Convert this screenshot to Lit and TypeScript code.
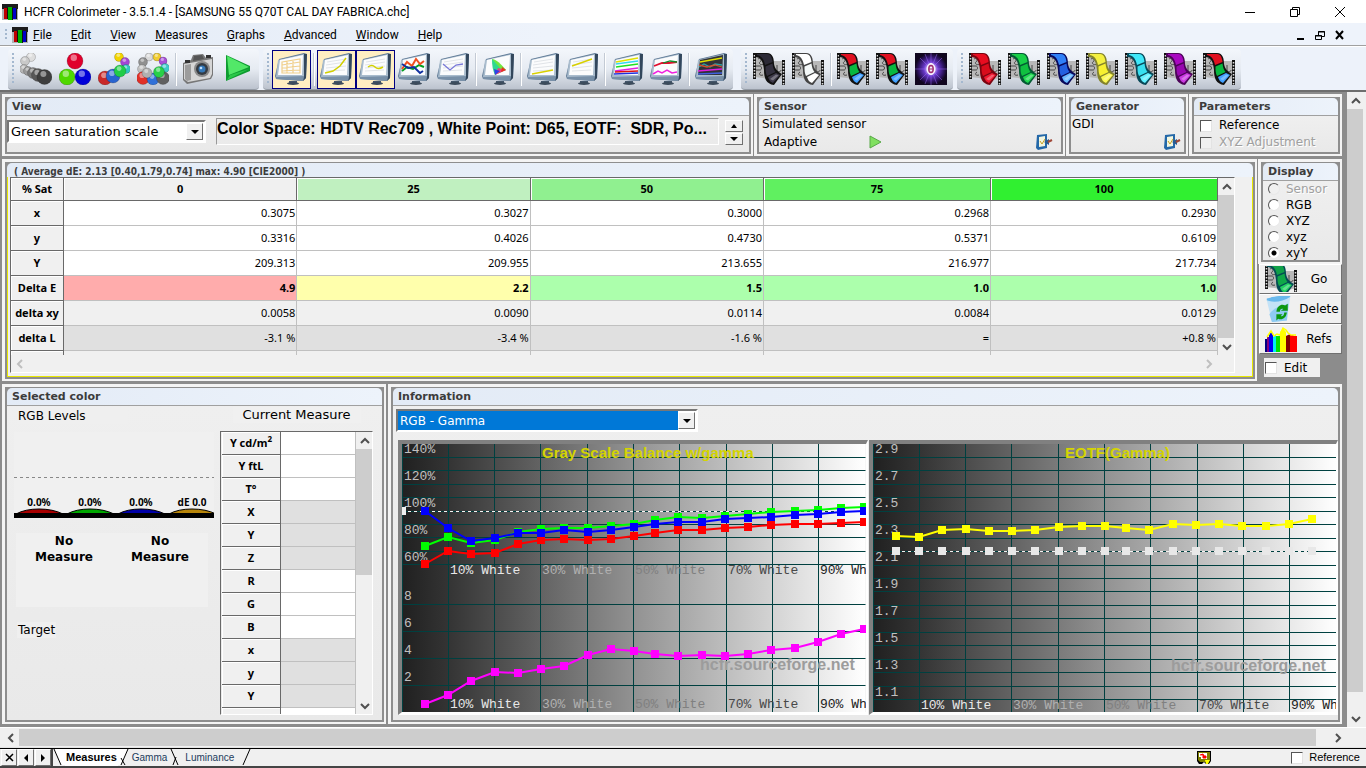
import { LitElement, html, svg, css, nothing } from "lit";
import { customElement } from "lit/decorators.js";
import { classMap } from "lit/directives/class-map.js";
import { styleMap } from "lit/directives/style-map.js";

/* ---------- toolbar glyphs (32 x 32) ---------- */

const ball = (x: number, y: number, r: number, c: string) => svg`
  <circle cx=${x} cy=${y} r=${r} fill=${c} stroke="#000" stroke-opacity=".3" stroke-width=".6"></circle>
  <circle cx=${x - r * 0.15} cy=${y - r * 0.4} r=${r * 0.4} fill="#fff" fill-opacity=".45"></circle>`;

const monitor = (inside: unknown, screen = "#fbfcfd") => svg`
  <path d="M4 6 29 0 32 1 31 25 28 28 1 26 0 23Z" fill="#5f7a96"></path>
  <path d="M3 7 29 1 29 24 1 24Z" fill="#a9bccd"></path>
  <path d="M29 1 32 1 31 25 28 28 29 24Z" fill="#33475c"></path>
  <path d="M1 24 29 23 28 28 1 26Z" fill="#7890a8"></path>
  <path d="M5 7 28 2 27 22 3 22Z" fill=${screen}></path>
  ${inside}
  <path d="M14 28h8v2h-8z" fill="#44566a"></path>
  <ellipse cx="18" cy="30.5" rx="6" ry="1.4" fill="#3c4b5b"></ellipse>`;

const faint = svg`<path d="M7 9 26 6M6 12 26 9M6 15 26 13M6 18 25 17" stroke="#d9dde2" stroke-width=".8" fill="none"></path>`;
const line = (d: string, c: string, w = 1.3) => svg`<path d=${d} stroke=${c} stroke-width=${w} fill="none"></path>`;

const film = (a: string, b: string, c: string, edge = "#111") => svg`
  <path d="M1 2 14 2 18 8 31 8 31 25 20 28 10 25 1 24Z" fill="#b8b8b8"></path>
  <path d="M5 6c3-2 4 2 2 3s1 4 4 2M2 13h5c2 0 2 4 0 4H3M24 12v5c0 3 4 2 4 0M22 20c2-2 6 0 4 3M8 19c-3 2-1 4 2 3" stroke="#444" fill="none"></path>
  <path d="M1.500 0V26M30.500 7V32" stroke="#111" stroke-width="3"></path>
  <path d="M1.500 2V25M30.500 9V32" stroke="#ddd" stroke-width="1.600" stroke-dasharray="1.500 1.500"></path>
  <path d="M2 0H14C20 0 21 6 21 11C22 16 24 18 29 21L21 32C13 31 11 25 11 17C10 8 8 4 2 4Z" fill=${edge}></path>
  <path d="M4 1H14C18 1 19 5 19.500 9L12 12C11 7 9 3 4 2Z" fill=${a}></path>
  <path d="M12.500 13.500 19.500 10.500C20 15 21 17 22.500 19L14 23C12.500 20 12.500 17 12.500 13.500Z" fill=${b}></path>
  <path d="M15 24 23 20 27 22 20 30C17 29 16 27 15 24Z" fill=${c}></path>
  <path d="M17 26 23 21.500 25.500 22.500 20 27.500Z" fill="#fff" fill-opacity=".3"></path>`;

const glyphs: Record<string, unknown> = {
  grays: svg`${ball(11, 4, 4.5, "#dedede")}${ball(5, 8, 4.5, "#c9c9c9")}${ball(4, 16, 4.5, "#b5b5b5")}${ball(8, 18, 4.5, "#9a9a9a")}${ball(13, 20, 5.5, "#787878")}${ball(18, 22, 6.5, "#585858")}${ball(24.5, 24, 7.5, "#3e3e3e")}`,
  primaries: svg`${ball(16, 8, 8, "#e0002c")}${ball(8, 24, 8, "#4fd800")}${ball(24, 24, 8, "#0000d8")}`,
  secondaries: svg`${ball(21, 4, 4.5, "#f2d400")}${ball(27, 9, 4.5, "#a444d4")}${ball(28, 16, 4.5, "#30c8c0")}${ball(7, 25, 7, "#c82828")}${ball(15, 23, 7, "#2864d0")}${ball(22, 18, 6, "#20cc48")}`,
  circle: svg`${ball(12, 4, 4, "#dadada")}${ball(20, 4, 4, "#f0cc30")}${ball(6, 9, 4.5, "#909090")}${ball(26, 8, 4, "#a850d8")}${ball(5, 16, 4.5, "#c0c0c0")}${ball(28, 15, 4.5, "#40ccc8")}${ball(6, 25, 6.5, "#e03028")}${ball(16, 26, 6, "#3070d8")}${ball(26, 25, 6.500, "#606060")}${ball(10, 20, 5, "#b0b0b0")}${ball(22, 19, 5.500, "#28d048")}`,
  camera: svg`
    <path d="M1 10 9 7 11 2 21 1 24 5 31 4 31 22 29 26 5 31 1 27Z" fill="#777"></path>
    <path d="M2 11 30 6 30 21 28 25 6 29 2 26Z" fill="#d6d6d6"></path>
    <path d="M3 12 9 11 9 27 5 28 3 26Z" fill="#9c9c9c"></path>
    <path d="M12 3 20 2 22 6 11 8Z" fill="#555"></path>
    <path d="M24 2h5v3h-5zM3 7h5v3H3z" fill="#333"></path>
    <circle cx="20" cy="16" r="8" fill="#8a8a8a"></circle><circle cx="20" cy="16" r="6" fill="#353b42"></circle>
    <circle cx="20" cy="16" r="3.500" fill="#3478b8"></circle><circle cx="19" cy="15" r="1.300" fill="#bfe0ff"></circle>`,
  play: svg`<path d="M5 2 29 13 29 18 5 28Z" fill="#0e9c30"></path><path d="M6 3 28 14 8 22Z" fill="#52e868"></path><path d="M6 27 28 16 9 22Z" fill="#2ac848"></path>`,
  grid: monitor(svg`<path d="M7 9 25 6V20L7 20ZM7 12 25 9M7 15 25 13M7 18 25 17M12 8V20M18 7V20" stroke="#f0cf8c" stroke-width="1.200" fill="none"></path>`),
  curve: monitor(svg`${faint}${line("M5 20 13 18 20 13 26 5", "#d2d000", 1.5)}`),
  wave: monitor(svg`${faint}${line("M9 14q4-3 7 0t8 0", "#d2d000", 1.5)}`),
  rgb: monitor(svg`${line("M4 18 9 14 15 16 21 12 26 14", "#00a020", 2)}${line("M4 16 9 9 14 13 18 6 22 11 26 8", "#f05020", 2)}${line("M4 11 10 15 16 14 22 20 25 18", "#1030a0", 2)}`),
  dip: monitor(svg`${faint}${line("M6 11 13 17 19 12 26 11", "#7878d8")}`),
  gamut: monitor(svg`<path d="M10 6C14 6 19 11 24 17L13 22Z" fill="#70e840"></path><path d="M10 6C10 13 11 18 13 22L18 15Z" fill="#30d890"></path><path d="M24 17 13 22 16 15Z" fill="#e84080"></path><path d="M13 22 12 16 18 18Z" fill="#3040e8"></path><path d="M20 14 24 17 19 19Z" fill="#e83020"></path>`),
  low: monitor(svg`${faint}${line("M5 21 26 17", "#d8d000", 1.600)}`),
  high: monitor(svg`${faint}${line("M6 13 26 6", "#d8d000", 1.600)}`),
  multi: monitor(svg`${line("M5 9 27 5", "#e0e000")}${line("M5 11 27 8", "#30d8f0")}${line("M5 14 27 11", "#20e020")}${line("M4 18 27 15", "#e020e0")}${line("M4 19 27 18", "#e01010")}${line("M3 21 27 20", "#2030e0")}`),
  mixed: monitor(svg`${line("M4 13 12 10 19 10 27 9", "#e01030", 1.800)}${line("M13 10 20 8 27 9", "#109030")}${line("M3 21 8 18 12 20 17 17 22 20 27 19", "#f020e0", 1.500)}`),
  dark: monitor(svg`${line("M5 9 27 5", "#e0e000")}${line("M4 14 9 11 15 14 20 11 27 12", "#30a0a0")}${line("M4 12 12 14 20 12 27 14", "#d05030")}${line("M3 18 27 16", "#e020e0")}${line("M3 21 27 20", "#4060e0")}`, "#323338"),
  filmDark: film("#2c2a36", "#33303e", "#3c3848"),
  filmWhite: film("#fff", "#f4f8f8", "#fff", "#444"),
  filmRgb: film("#e01020", "#08b840", "#40a0ff"),
  filmRed: film("#e80c20", "#d80c1c", "#f01830", "#7a0410"),
  filmGreen: film("#18d048", "#10c040", "#20d850", "#045a34"),
  filmBlue: film("#3080f8", "#2460e0", "#68b8ff", "#08085a"),
  filmYellow: film("#f4f040", "#f8f030", "#fcf850", "#83832c"),
  filmCyan: film("#40e8f8", "#38e0f0", "#60f0ff", "#084858"),
  filmPurple: film("#a808c0", "#9808b0", "#c838e0", "#4c0458"),
  filmGo: film("#10a048", "#10a848", "#20d060", "#044c54"),
  nova: svg`<defs><radialGradient id="nova"><stop offset="0" stop-color="#fff"></stop><stop offset=".22" stop-color="#d0b0ff"></stop><stop offset=".45" stop-color="#6838c8"></stop><stop offset=".8" stop-color="#2c125e"></stop><stop offset="1" stop-color="#10061e"></stop></radialGradient></defs>
    <rect width="32" height="32" fill="url(#nova)"></rect>
    <path d="M16 0V11M16 21V32M0 16H10M22 16H32M5 5 12 12M27 5 20 12M5 27 12 20M27 27 20 20M10 1 14 11M22 1 18 11M10 31 14 21M22 31 18 21" stroke="#a070ff" stroke-opacity=".6" stroke-width=".8"></path>
    <ellipse cx="16" cy="16" rx="4" ry="5.500" fill="#f4ecff" stroke="#fff"></ellipse><ellipse cx="16" cy="16" rx="2.200" ry="3.500" fill="none" stroke="#a03070" stroke-width="1.500"></ellipse><path d="M14 16h4" stroke="#a03070"></path>`,
  bin: svg`<path d="M2 6 29 1 25 29 8 31Z" fill="#c4e2f6"></path><path d="M2 6C9 9 20 8 29 2L28 1C20 0 8 2 2 4Z" fill="#68b8ec"></path><path d="M5 22C10 15 15 13 27 10L25 29 8 31Z" fill="#8ecbf2"></path>
    <path d="M13 19c1-7 6-9 10-7l3-2v8h-8l3-2c-2-1-4 0-4 3zM25 20c-1 7-6 9-10 7l-2 2v-7h7l-2 2c2 1 4-1 4-4z" fill="#0c9810"></path>`,
  spectrum: svg`<path d="M0 29V16h2V29z" fill="#000080"></path><path d="M2 29V14h3V29z" fill="#800080"></path><path d="M4 29V12l2-4 2 4V29z" fill="#0000f0"></path><path d="M8 29V14l3-3V29z" fill="#00f0f0"></path><path d="M11 29V13h4V29z" fill="#00e000"></path><path d="M15 29V9l3-4 3 4V29z" fill="#ff0"></path><path d="M21 29V13l4-2v18z" fill="#800000"></path><path d="M25 29V12h3l1 1h3v16z" fill="#f00"></path><path d="M2 14 6 8 9 13 12 11 15 12 18 5 21 7 23 10 26 12 31 12" stroke="#ff0" stroke-width="1.500" fill="none"></path>`,
};

const icon = (name: string, w = 32, h = 32) =>
  html`<svg class="glyph" width=${w} height=${h} viewBox="0 0 32 32" preserveAspectRatio="xMidYMid slice" aria-hidden="true">${glyphs[name]}</svg>`;

const chevron = (dir: string) => {
  const d: Record<string, string> = { up: "M1 7 5 3 9 7", down: "M1 3 5 7 9 3", left: "M7 1 3 5 7 9", right: "M3 1 7 5 3 9" };
  return html`<svg class="chev" width="10" height="10" viewBox="0 0 10 10" aria-hidden="true"><path d=${d[dir]} fill="none" stroke="currentColor" stroke-width="2"></path></svg>`;
};
const triangle = (dir: string) => {
  const d: Record<string, string> = { up: "M4 2 7 6H1Z", down: "M0 2H8L4 6Z", left: "M6 0V8L2 4Z", right: "M2 0V8L6 4Z" };
  return html`<svg width="8" height="8" viewBox="0 0 8 8" aria-hidden="true"><path d=${d[dir]} fill="#000"></path></svg>`;
};
const sheet = html`<svg width="18" height="18" viewBox="0 0 18 18" aria-hidden="true"><path d="M2 2 12 1 12 15 3 17 1 15Z" fill="#2468a8"></path><path d="M4 4 10 3 10 13 4 14Z" fill="#f2f6e0"></path><path d="M5 8 7 11 10 6" stroke="#c8a020" fill="none"></path><path d="M9 9 14 6V12Z" fill="#2c5c90"></path><path d="M13 9 17 7" stroke="#a04838" stroke-width="2"></path></svg>`;
const appMark = html`<svg width="16" height="16" viewBox="0 0 16 16" aria-hidden="true"><rect width="16" height="16" fill="#1c1c1c"></rect><path d="M0 5H16V16H0Z" fill="#c9ccd0" fill-opacity=".85"></path><path d="M2 4h3v11H2z" fill="#c00000"></path><path d="M6 3h4v13H6z" fill="#00b000"></path><path d="M11 4h3v11h-3z" fill="#0000c8"></path><path d="M5 4h1v11H5zM10 4h1v12h-1zM14 5h1v10h-1z" fill="#111"></path></svg>`;

/* ---------- data ---------- */

type Tool = string | { name: string; on: true };
const toolbars: Tool[][] = [
  ["grays", "primaries", "secondaries", "circle", "|", "camera", "play"],
  [{ name: "grid", on: true }, "|", { name: "curve", on: true }, { name: "wave", on: true }, "rgb", "dip", "|", "gamut", "|", "low", "high", "|", "multi", "mixed", "|", "dark"],
  ["filmDark", "filmWhite", "|", "filmRgb", "filmRgb", "nova"],
  ["filmRed", "filmGreen", "filmBlue", "filmYellow", "filmCyan", "filmPurple", "filmRgb"],
];
const menus = ["File", "Edit", "View", "Measures", "Graphs", "Advanced", "Window", "Help"];

const saturations = [
  { label: "0", color: "#f0f0f0" },
  { label: "25", color: "#c0f0c0" },
  { label: "50", color: "#90f090" },
  { label: "75", color: "#60f060" },
  { label: "100", color: "#30f030" },
];
const measures: { label: string; kind: string; cells: string[] }[] = [
  { label: "x", kind: "plain", cells: ["0.3075", "0.3027", "0.3000", "0.2968", "0.2930"] },
  { label: "y", kind: "plain", cells: ["0.3316", "0.4026", "0.4730", "0.5371", "0.6109"] },
  { label: "Y", kind: "plain", cells: ["209.313", "209.955", "213.655", "216.977", "217.734"] },
  { label: "Delta E", kind: "delta", cells: ["4.9", "2.2", "1.5", "1.0", "1.0"] },
  { label: "delta xy", kind: "light", cells: ["0.0058", "0.0090", "0.0114", "0.0084", "0.0129"] },
  { label: "delta L", kind: "mid", cells: ["-3.1 %", "-3.4 %", "-1.6 %", "=", "+0.8 %"] },
];
const deltaColors = ["#ffacac", "#ffffac", "#acffac", "#acffac", "#acffac"];

const stepX = [23, 46, 69, 93, 116, 139, 162, 186, 209, 232, 253, 276, 300, 323, 346, 369, 393, 416, 439, 462];
const green = [102, 93, 99, 96, 88, 85, 84, 84, 82, 80, 76, 73, 74, 72, 70, 68, 67, 66, 64, 63];
const blue = [67, 84, 97, 94, 89, 89, 86, 88, 86, 83, 80, 78, 78, 75, 74, 73, 71, 70, 68, 67];
const red = [120, 107, 110, 109, 100, 96, 95, 96, 95, 92, 89, 86, 86, 84, 83, 81, 80, 80, 79, 78];
const deltaE = [260, 251, 237, 228, 229, 225, 222, 211, 205, 207, 210, 212, 211, 212, 210, 206, 204, 198, 190, 185];
const gamma = [92, 93, 86, 85, 87, 87, 86, 83, 82, 82, 84, 86, 80, 81, 80, 82, 82, 80, 75];

const series = (ys: number[], color: string) => svg`
  <polyline points=${ys.map((y, i) => `${stepX[i]},${y}`).join(" ")} fill="none" stroke=${color} stroke-width="2"></polyline>
  ${ys.map((y, i) => svg`<rect x=${stepX[i] - 4} y=${y - 4} width="8" height="8" fill=${color}></rect>`)}`;
const columns = [0, 46, 92, 138, 185, 231, 277, 324, 370, 416];
const rules = (ys: number[]) => svg`
  ${ys.map((y) => svg`<rect x="0" y=${y} width="100%" height="1" fill="#004040"></rect>`)}
  ${columns.map((x) => svg`<rect x=${x} y="0" width="1" height="100%" fill="#004040"></rect>`)}`;
const whites = (y: number) =>
  [["10%", 48, "#e8e8e8"], ["30%", 140, "#b0b0b0"], ["50%", 233, "#808080"], ["70%", 326, "#484848"], ["90%", 418, "#202020"]].map(
    ([t, x, c]) => svg`<text class="tick" x=${x} y=${y} fill=${c}>${t} White</text>`
  );
const ramp = (id: string) => svg`
  <defs><linearGradient id=${id}><stop offset="0" stop-color="#202020"></stop><stop offset=".1" stop-color="#343434"></stop><stop offset=".5" stop-color="#929292"></stop><stop offset="1" stop-color="#fff"></stop></linearGradient></defs>
  <rect width="100%" height="100%" fill=${`url(#${id})`}></rect>`;

/* ---------- bevelled group box ---------- */

@customElement("group-box")
class GroupBox extends LitElement {
  static properties = { heading: {}, tone: { reflect: true } };
  declare heading: string;
  declare tone: string;
  static styles = css`
    :host { display: flex; box-sizing: border-box; border: solid #f4f4f4; border-width: 3px 2px 2px 3px; min-width: 0; }
    .frame { flex: 1; display: flex; flex-direction: column; min-width: 0; border: solid #8e8e8e; border-width: 1px 2px 2px 2px; background: #8e8e8e; }
    .head { box-sizing: border-box; height: 18px; padding-left: 5px; border-bottom: 1px solid #a0a0a0; border-radius: 5px 5px 0 0;
      background: linear-gradient(90deg, #e3ebf6, #edf3fb); font: bold 11px/18px "DejaVu Sans", Verdana, sans-serif; color: #3c3c3c; white-space: pre; overflow: hidden; }
    .body { flex: 1; display: flex; min-width: 0; min-height: 0; background: linear-gradient(#efefef, #e9e9e9); }
    :host([tone="picked"]) .head { height: 14px; border: 0; padding-left: 7px; font: bold 10px/18px "DejaVu Sans Condensed", Tahoma, sans-serif; }
    :host([tone="picked"]) .body { border: solid #e8e800; border-width: 0 1px 1px 1px; background: #f0f0f0; }
  `;
  render() {
    return html`<section class="frame"><div class="head">${this.heading}</div><div class="body"><slot></slot></div></section>`;
  }
}

/* ---------- scroll bar ---------- */

@customElement("scroll-bar")
class ScrollBar extends LitElement {
  static properties = { dir: { reflect: true }, size: { type: Number }, idle: { type: Boolean, reflect: true } };
  declare dir: string;
  declare size: number;
  declare idle: boolean;
  static styles = css`
    :host { display: flex; background: #f0f0f0; color: #505050; }
    :host([dir="col"]) { flex-direction: column; width: 16px; }
    :host([idle]) { color: #bfbfbf; padding-right: 17px; }
    button { flex: none; display: grid; place-items: center; width: 17px; height: 17px; padding: 0; border: 0; background: none; color: inherit; }
    .track { flex: 1; display: flex; flex-direction: inherit; min-height: 0; }
    .thumb { background: #cdcdcd; }
  `;
  render() {
    const vertical = this.dir === "col";
    return html`<button aria-label=${vertical ? "Scroll up" : "Scroll left"}>${chevron(vertical ? "up" : "left")}</button>
      <div class="track">${this.idle ? nothing : html`<div class="thumb" style=${styleMap({ flexBasis: `${this.size}%` })}></div>`}</div>
      <button aria-label=${vertical ? "Scroll down" : "Scroll right"}>${chevron(vertical ? "down" : "right")}</button>`;
  }
}

/* ---------- application ---------- */

@customElement("app-root")
class AppRoot extends LitElement {
  static styles = css`
    :host { display: flex; flex-direction: column; height: 100vh; overflow: hidden; background: #f0f0f0; color: #000;
      font: 12px/16px "DejaVu Sans", Verdana, sans-serif; }
    * { box-sizing: border-box; }
    button, select, input { font: inherit; color: inherit; margin: 0; }
    button { padding: 0; }
    svg { display: block; flex: none; }
    label { display: flex; align-items: center; }

    .title { display: flex; align-items: center; gap: 6px; height: 23px; padding: 0 16px 0 2px; background: #fff; font: 12px/20px Roboto, "Segoe UI", sans-serif; }
    .title h1 { flex: 1; margin: 0; font: inherit; }
    .title .caption { display: flex; gap: 25px; }
    .caption button { width: 20px; height: 18px; border: 0; background: none; display: grid; place-items: center; }
    .menu { display: flex; align-items: center; height: 24px; padding: 0 16px 0 5px; background: linear-gradient(90deg, #e3ebf6, #eef3fb 40%); border-bottom: 1px solid #fff; box-shadow: inset 0 -1px #a0a0a0; font: 12px/16px Roboto, "Segoe UI", sans-serif; }
    .menu .grip { height: 12px; margin-right: 5px; }
    .menu nav { flex: 1; display: flex; gap: 19px; padding-left: 5px; }
    .menu a { color: #000; text-decoration: none; }
    .menu .caption { display: flex; }

    .grip { width: 2px; background: repeating-linear-gradient(#a4b8cf 0 2px, transparent 2px 4px); }
    .bars { display: flex; height: 43px; padding: 2px 0 0 8px; background: #edf2fa; }
    .bar { display: flex; align-items: flex-start; height: 41px; padding: 1px 2px 1px 4px; border-bottom: 1px solid #949ba5; border-radius: 4px; background: linear-gradient(#f3f6fb, #e6ebf2 50%, #bcc3ce); }
    .bar + .bar { margin-left: 4px; }
    .bar:nth-child(3) { margin-left: 8px; }
    .bar .grip { height: 31px; margin: 3px 3px 0 0; }
    .bar button { display: grid; place-items: start; width: 39px; height: 39px; padding: 2px; border: 1px solid transparent; background: none; }
    .bar button.on { background: #ffeec2; border-color: #000080; }
    .bar hr { width: 2px; height: 33px; margin: 3px 2px 0; border: 0; border-left: 1px solid #c3cad4; background: #fff; }

    .work { flex: 1; display: flex; min-height: 0; border-top: 2px solid #6e6e6e; background: #8c8c8c; }
    .form { flex: 1; display: flex; flex-direction: column; gap: 3px; min-width: 0; padding: 2px 5px 3px 2px; }
    .row { display: flex; gap: 1px; }
    .grow { flex: 1; }
    .work > scroll-bar { margin-right: 3px; box-shadow: 3px 0 #f0f0f0; }

    .strip { height: 62px; }
    .sensor { width: 311px; }
    .generator { width: 122px; }
    .params { width: 153px; }
    .view { flex: 1; display: flex; min-width: 0; align-items: flex-start; padding: 2px 6px 0 0; }
    .combo { display: grid; grid-template-columns: 1fr 18px; align-items: center; border: 2px solid; border-color: #777 #fff #fff #777; background: #fff; height: 23px; }
    .combo select { grid-area: 1 / 1 / 2 / 3; width: 100%; height: 19px; border: 0; padding: 0 2px; appearance: none; background: #fff; font-size: 12px; }
    .combo.scale select { font-size: 13px; }
    .combo .drop { grid-area: 1 / 2; z-index: 1; display: grid; place-items: center; width: 17px; height: 17px; pointer-events: none; }
    .bevel { background: #f0f0f0; border: 1px solid; border-color: #fff #707070 #707070 #fff; }
    .scale { width: 199px; margin-top: 2px; }
    .summary { flex: 1; min-width: 0; height: 27px; margin-left: 10px; border: 1px solid; border-color: #999 #fff #fff #999; font: bold 16px/19px "Liberation Sans", Arial, sans-serif; white-space: pre; overflow: hidden; text-overflow: ellipsis; }
    .spin { display: flex; flex-direction: column; gap: 1px; margin: 2px 0 0 6px; }
    .spin button, .pager button { display: grid; place-items: center; }
    .spin button { width: 18px; height: 12px; }
    .stack { flex: 1; display: flex; flex-direction: column; padding: 0 3px; line-height: 17px; font-size: 12px; }
    .generator .stack { padding-left: 1px; }
    .split { display: flex; align-items: center; padding: 0 2px; }
    .split svg { margin-left: 52px; }
    .split button, .stack > button { border: 0; background: none; }
    .split button { margin-left: auto; margin-right: 3px; }
    .split button svg { margin: 0; }
    .stack > button { align-self: flex-end; }
    .params .stack { padding: 1px 6px; }
    .params input { margin-right: 7px; }
    .off { color: #a0a0a0; text-shadow: 1px 1px #fff; }
    input[type="checkbox"] { appearance: none; flex: none; width: 12px; height: 12px; border: 1px solid; border-color: #555 #e3e3e3 #e3e3e3 #555; background: #fff; }
    input[type="checkbox"]:disabled { background: #f0f0f0; }

    .data { height: 222px; }
    .display-col { width: 84px; display: flex; flex-direction: column; }
    .display { height: 105px; }
    .radios { flex: 1; display: flex; flex-direction: column; padding: 0 5px; font-size: 12px; line-height: 16px; }
    .radios label { gap: 6px; height: 16px; }
    input[type="radio"] { appearance: none; width: 12px; height: 12px; border-radius: 50%; border: 1px solid; border-color: #555 #e8e8e8 #e8e8e8 #555; background: #fff; }
    input[type="radio"]:checked { background: radial-gradient(#000 0 2px, #fff 3px); }
    input[type="radio"]:disabled { background: #f0f0f0; }
    .action { display: grid; grid-template-columns: 32px 1fr; align-items: center; height: 30px; padding: 0 0 0 5px; margin-left: 1px; }
    .edit { width: 56px; height: 19px; margin: 4px 0 0 6px; padding-left: 1px; gap: 7px; background: #f0f0f0; }

    .sheet { flex: 1; display: flex; flex-direction: column; min-width: 0; margin: 0 17px 3px 2px; border: 1px solid; border-color: #696969 #fff #fff #696969; }
    .view-port { flex: 1; display: flex; min-height: 0; }
    .clip { flex: 1; min-width: 0; overflow: hidden; }
    table { border-collapse: separate; border-spacing: 0; table-layout: fixed; width: 100%; font: 11px/16px "Noto Sans", "Segoe UI", sans-serif; }
    th, td { padding: 0; overflow: hidden; white-space: nowrap; }
    th { font-weight: bold; text-align: center; border: solid #696969; border-width: 0 1px 1px 0; background: #f0f0f0; box-shadow: inset 1px 1px #fff; }
    td { text-align: right; padding-right: 1px; border: solid #c0c0c0; border-width: 0 1px 1px 0; background: #fff; }
    .wide thead tr { height: 23px; }
    .wide tbody tr { height: 25px; }
    .wide .first { width: 53px; }
    .wide .narrow { width: 227px; }
    .delta td { font-weight: bold; }
    .light td { background: #f0f0f0; }
    .mid td, .small .mid td { background: #e0e0e0; }

    .detail { flex: 1; gap: 2px; min-height: 0; }
    .selected { width: 384px; }
    .pick { flex: 1; display: flex; justify-content: space-between; padding: 1px 9px 5px 7px; }
    .levels { width: 200px; display: flex; flex-direction: column; padding-top: 1px; }
    .tag { align-self: flex-start; margin-left: 3px; padding: 0 1px; height: 16px; background: #efefef; }
    .tag.wide-tag { width: 111px; }
    .meter { margin-top: 8px; }
    .meter text { font: bold 10px "Noto Sans", "Segoe UI", sans-serif; text-anchor: middle; }
    .none { display: flex; width: 192px; height: 74px; margin: 14px 0 15px 2px; background: #f0f0f0; font-weight: bold; text-align: center; }
    .none p { flex: 1; margin: 0; }
    .current { width: 153px; display: flex; flex-direction: column; align-items: center; }
    .current h2 { margin: 0 0 8px; width: 128px; text-align: center; font: inherit; font-size: 13px; background: #f0f0f0; }
    .small-box { flex: 1; align-self: stretch; display: flex; min-height: 0; border: 1px solid; border-color: #696969 #fff #fff #696969; padding-left: 1px; }
    .small tr { height: 23px; }
    .small .first { width: 59px; }
    sup { font-size: 8px; line-height: 0; vertical-align: 5px; }

    .info { flex: 1; display: flex; flex-direction: column; min-width: 0; padding: 3px 0 5px 3px; }
    .mode { width: 302px; margin-bottom: 8px; }
    .mode select { background: #0078d7; color: #fff; width: calc(100% - 18px); }
    .charts { flex: 1; display: flex; gap: 1px; min-height: 0; margin-left: 2px; }
    .chart { flex: 1; min-width: 0; border: solid; border-width: 4px 2px 3px 4px; border-color: #808080 #fff #fff #808080; }
    .chart svg { width: 100%; height: 100%; overflow: hidden; }
    .tick { font: 13px "Liberation Mono", "Courier New", monospace; white-space: pre; }
    .cap { font: bold 15px "Liberation Sans", Arial, sans-serif; }
    .mark { font: bold 16px "Liberation Sans", Arial, sans-serif; }

    .hbar { height: 21px; padding: 1px 20px 2px 2px; border-top: 1px solid #fff; background: #f0f0f0; box-shadow: inset 0 -1px #e3e3e3; }
    .foot { display: flex; align-items: stretch; height: 20px; border-top: 1px solid #000; border-bottom: 2px solid #444; font: 10px/17px "Liberation Sans", Arial, sans-serif; }
    .pager { display: flex; gap: 1px; padding: 0 0 0 1px; border-right: 2px solid #444; }
    .pager button { width: 16px; }
    .tabs { display: flex; flex: 1; }
    .tabs a { color: #1c3c5c; text-decoration: none; padding: 0 1px; }
    .tabs .current-tab { color: #000; font-weight: bold; background: #fff; font-size: 11px; }
    .status { display: flex; align-items: center; padding-right: 6px; font-size: 11px; }
    .status label { gap: 6px; margin-left: 80px; }
  `;

  private filmstrip(t: Tool) {
    if (t === "|") return html`<hr />`;
    const name = typeof t === "string" ? t : t.name;
    return html`<button class=${classMap({ on: typeof t !== "string" })} aria-label=${name}>${icon(name)}</button>`;
  }

  private combo(cls: string, label: string, value: string) {
    return html`<div class="combo ${cls}"><select aria-label=${label}><option>${value}</option></select><span class="drop bevel">${triangle("down")}</span></div>`;
  }

  private grid() {
    return html`<div class="sheet">
      <div class="view-port">
        <div class="clip"><table class="wide">
          <colgroup><col class="first" /><col /><col /><col /><col class="narrow" /><col class="narrow" /></colgroup>
          <thead><tr><th scope="col">% Sat</th>${saturations.map((s) => html`<th scope="col" style=${styleMap({ background: s.color })}>${s.label}</th>`)}</tr></thead>
          <tbody>
            ${measures.map((m) => html`<tr class=${m.kind}><th scope="row">${m.label}</th>${m.cells.map((c, i) =>
              m.kind === "delta" ? html`<td style=${styleMap({ background: deltaColors[i] })}>${c}</td>` : html`<td>${c}</td>`)}</tr>`)}
            <tr class="light"><th></th>${saturations.map(() => html`<td></td>`)}</tr>
          </tbody>
        </table></div>
        <scroll-bar dir="col" size="100"></scroll-bar>
      </div>
      <scroll-bar dir="row" idle></scroll-bar>
    </div>`;
  }

  private balance() {
    return html`<div class="chart"><svg role="img" aria-label="Gray Scale Balance">
      ${ramp("ramp-balance")}
      ${rules([13, 26, 40, 53, 67, 80, 93, 107, 120, 160, 187, 214, 241])}
      ${["140%", "120%", "100%", "80%", "60%"].map((t, i) => svg`<text class="tick" x="2" y=${9 + 27 * i} fill="#c0c0c0">${t}</text>`)}
      ${["8", "6", "4", "2"].map((t, i) => svg`<text class="tick" x="2" y=${156 + 27 * i} fill="#c0c0c0">${t}</text>`)}
      ${whites(130)}${whites(264)}
      <text class="cap" x="140" y="14" fill="#d4d400">Gray Scale Balance w/gamma</text>
      <text class="mark" x="298" y="226" fill="#9c9c9c">hcfr.sourceforge.net</text>
      <path d="M0 67.500H1000" stroke="#f4f4f4" stroke-dasharray="3 3"></path><rect x="0" y="63" width="4" height="8" fill="#f0f0f0"></rect>
      ${series(green, "#00ff00")}${series(red, "#ff0000")}${series(blue, "#0000ff")}${series(deltaE, "#ff00ff")}
    </svg></div>`;
  }

  private eotf() {
    return html`<div class="chart"><svg role="img" aria-label="EOTF Gamma">
      ${ramp("ramp-eotf")}
      ${rules([13, 26, 40, 53, 67, 80, 94, 107, 121, 134, 147, 161, 174, 188, 201, 215, 228, 242, 255])}
      ${["2.9", "2.7", "2.5", "2.3", "2.1", "1.9", "1.7", "1.5", "1.3", "1.1"].map((t, i) => svg`<text class="tick" x="2" y=${9 + 27 * i} fill="#c0c0c0">${t}</text>`)}
      ${whites(265)}
      <text class="cap" x="192" y="14" fill="#d4d400">EOTF(Gamma)</text>
      <text class="mark" x="298" y="227" fill="#9c9c9c">hcfr.sourceforge.net</text>
      <path d="M23 107.500H439" stroke="#f0f0f0" stroke-dasharray="3 3"></path>
      ${gamma.map((_, i) => svg`<rect x=${stepX[i] - 4} y="103" width="8" height="8" fill="#e8e8e8"></rect>`)}
      ${series(gamma, "#ffff00")}
    </svg></div>`;
  }

  private meter() {
    const bars = [["0.0%", 25, "#a80000"], ["0.0%", 76, "#00a800"], ["0.0%", 127, "#0000a8"], ["dE 0.0", 178, "#b8860b"]] as const;
    return html`<svg class="meter" width="200" height="87" role="img" aria-label="RGB levels">
      <rect width="200" height="87" fill="#f0f0f0"></rect>
      <path d="M0 45.500H200" stroke="#888" stroke-dasharray="3 3"></path>
      ${bars.map(([t, x, c]) => svg`<path d="M${x - 23} 82 Q${x - 14} 77 ${x} 77 T${x + 24} 82Z" fill=${c} stroke="#000"></path><text x=${x} y="74">${t}</text>`)}
      <rect y="81" width="200" height="5" fill="#000"></rect>
    </svg>`;
  }

  private currentMeasure() {
    const rows = [html`Y cd/m<sup>2</sup>`, "Y ftL", "T°", "X", "Y", "Z", "R", "G", "B", "x", "y", "Y", ""];
    return html`<div class="small-box"><div class="clip"><table class="small"><colgroup><col class="first" /><col /></colgroup><tbody>
      ${rows.map((r, i) => html`<tr class=${Math.floor(i / 3) % 2 ? "mid" : "plain"}><th scope="row">${r}</th><td></td></tr>`)}
    </tbody></table></div><scroll-bar dir="col" size="51"></scroll-bar></div>`;
  }

  render() {
    return html`
      <header class="title">${appMark}<h1>HCFR Colorimeter - 3.5.1.4 - [SAMSUNG 55 Q70T CAL DAY FABRICA.chc]</h1>
        <div class="caption">
          <button aria-label="Minimize"><svg width="12" height="12"><path d="M1 6.500h10" stroke="#000"></path></svg></button>
          <button aria-label="Restore"><svg width="12" height="12"><path d="M1.500 3.500h7v7h-7zM3.500 3V1.500h7v7H9" fill="none" stroke="#000"></path></svg></button>
          <button aria-label="Close"><svg width="12" height="12"><path d="M1 1 11 11M11 1 1 11" stroke="#000"></path></svg></button>
        </div>
      </header>
      <div class="menu"><span class="grip"></span>${appMark}
        <nav>${menus.map((m) => html`<a href="#${m}"><u>${m[0]}</u>${m.slice(1)}</a>`)}</nav>
        <div class="caption">
          <button aria-label="Minimize document"><svg width="12" height="12"><path d="M3 10h7" stroke="#000" stroke-width="2"></path></svg></button>
          <button aria-label="Restore document"><svg width="12" height="12"><path d="M1.500 6.500h6v4h-6zM4.500 6V2.500h6v5H8M4 3h7M1 7h7" fill="none" stroke="#000"></path></svg></button>
          <button aria-label="Close document"><svg width="12" height="12"><path d="M2 2 9 10M9 2 2 10" stroke="#000" stroke-width="2"></path></svg></button>
        </div>
      </div>
      <div class="bars">${toolbars.map((b) => html`<div class="bar" role="toolbar"><span class="grip"></span>${b.map((t) => this.filmstrip(t))}</div>`)}</div>

      <main class="work">
        <div class="form">
          <div class="row strip">
            <group-box class="grow" heading="View"><div class="view">
              ${this.combo("scale", "Measure series", "Green saturation scale")}
              <div class="summary">Color Space: HDTV Rec709 , White Point: D65, EOTF:  SDR, Po...</div>
              <div class="spin"><button class="bevel" aria-label="Previous">${triangle("up")}</button><button class="bevel" aria-label="Next">${triangle("down")}</button></div>
            </div></group-box>
            <group-box class="sensor" heading="Sensor"><div class="stack"><span>Simulated sensor</span>
              <div class="split"><span>Adaptive</span><svg width="13" height="14"><path d="M1 1 12 7 1 13Z" fill="#80e060" stroke="#58a848"></path></svg><button aria-label="Configure sensor">${sheet}</button></div></div></group-box>
            <group-box class="generator" heading="Generator"><div class="stack"><span>GDI</span><button aria-label="Configure generator">${sheet}</button></div></group-box>
            <group-box class="params" heading="Parameters"><div class="stack">
              <label><input type="checkbox" />Reference</label>
              <label class="off"><input type="checkbox" disabled />XYZ Adjustment</label></div></group-box>
          </div>

          <div class="row data">
            <group-box class="grow" tone="picked" heading="( Average dE: 2.13 [0.40,1.79,0.74] max: 4.90 [CIE2000] )">${this.grid()}</group-box>
            <div class="display-col">
              <group-box class="display" heading="Display"><div class="radios">
                ${["Sensor", "RGB", "XYZ", "xyz", "xyY"].map((r) => html`<label class=${classMap({ off: r === "Sensor" })}><input type="radio" name="display" ?disabled=${r === "Sensor"} ?checked=${r === "xyY"} />${r}</label>`)}
              </div></group-box>
              <button class="action bevel">${icon("filmGo", 32, 26)}<span>Go</span></button>
              <button class="action bevel">${icon("bin", 28, 26)}<span>Delete</span></button>
              <button class="action bevel">${icon("spectrum", 32, 26)}<span>Refs</span></button>
              <label class="edit"><input type="checkbox" />Edit</label>
            </div>
          </div>

          <div class="row detail">
            <group-box class="selected" heading="Selected color"><div class="pick">
              <div class="levels"><span class="tag wide-tag">RGB Levels</span>${this.meter()}
                <div class="none"><p>No<br />Measure</p><p>No<br />Measure</p></div>
                <span class="tag">Target</span></div>
              <div class="current"><h2>Current Measure</h2>${this.currentMeasure()}</div>
            </div></group-box>
            <group-box class="grow" heading="Information"><div class="info">
              ${this.combo("mode", "Graph", "RGB - Gamma")}
              <div class="charts">${this.balance()}${this.eotf()}</div>
            </div></group-box>
          </div>
        </div>
        <scroll-bar dir="col" size="97"></scroll-bar>
      </main>
      <div class="hbar"><scroll-bar dir="row" size="99"></scroll-bar></div>
      <footer class="foot">
        <div class="pager">
          <button class="bevel" aria-label="Close tab"><svg width="9" height="9"><path d="M1 1 8 8M8 1 1 8" stroke="#000" stroke-width="1.500"></path></svg></button>
          <button class="bevel" aria-label="Previous tab">${triangle("left")}</button>
          <button class="bevel" aria-label="Next tab">${triangle("right")}</button>
        </div>
        <nav class="tabs">
          <svg width="12" height="17"><path d="M1 0 8 16H12V0Z" fill="#fff"></path><path d="M1 0 8 16" stroke="#000"></path></svg>
          <a class="current-tab" href="#measures">Measures</a>
          <svg width="13" height="17"><path d="M0 0H10L3 16H0Z" fill="#fff"></path><path d="M10 0 3 16M3 9 7 16" stroke="#000" fill="none"></path></svg>
          <a href="#gamma">Gamma</a>
          <svg width="16" height="17"><path d="M3 0 10 16M8 8 5 16" stroke="#000"></path></svg>
          <a href="#luminance">Luminance</a>
          <svg width="16" height="17"><path d="M15 0 8 16" stroke="#000"></path></svg>
        </nav>
        <div class="status">
          <svg width="14" height="14"><path d="M0 0H14V10L12 13H9L7 11 5 13H2L0 10Z" fill="#000"></path><path d="M1 1H13V9L11 11H3L1 9Z" fill="#808000"></path><path d="M2 2H10V8H4V6H2Z" fill="#fff"></path><path d="M3 4 6 3 7 5M6 5h3v2H6z" stroke="#f00" fill="#f00"></path><path d="M8 9h5l-2 4H9z" fill="#ff0"></path></svg>
          <label><input type="checkbox" />Reference</label>
        </div>
      </footer>`;
  }
}
